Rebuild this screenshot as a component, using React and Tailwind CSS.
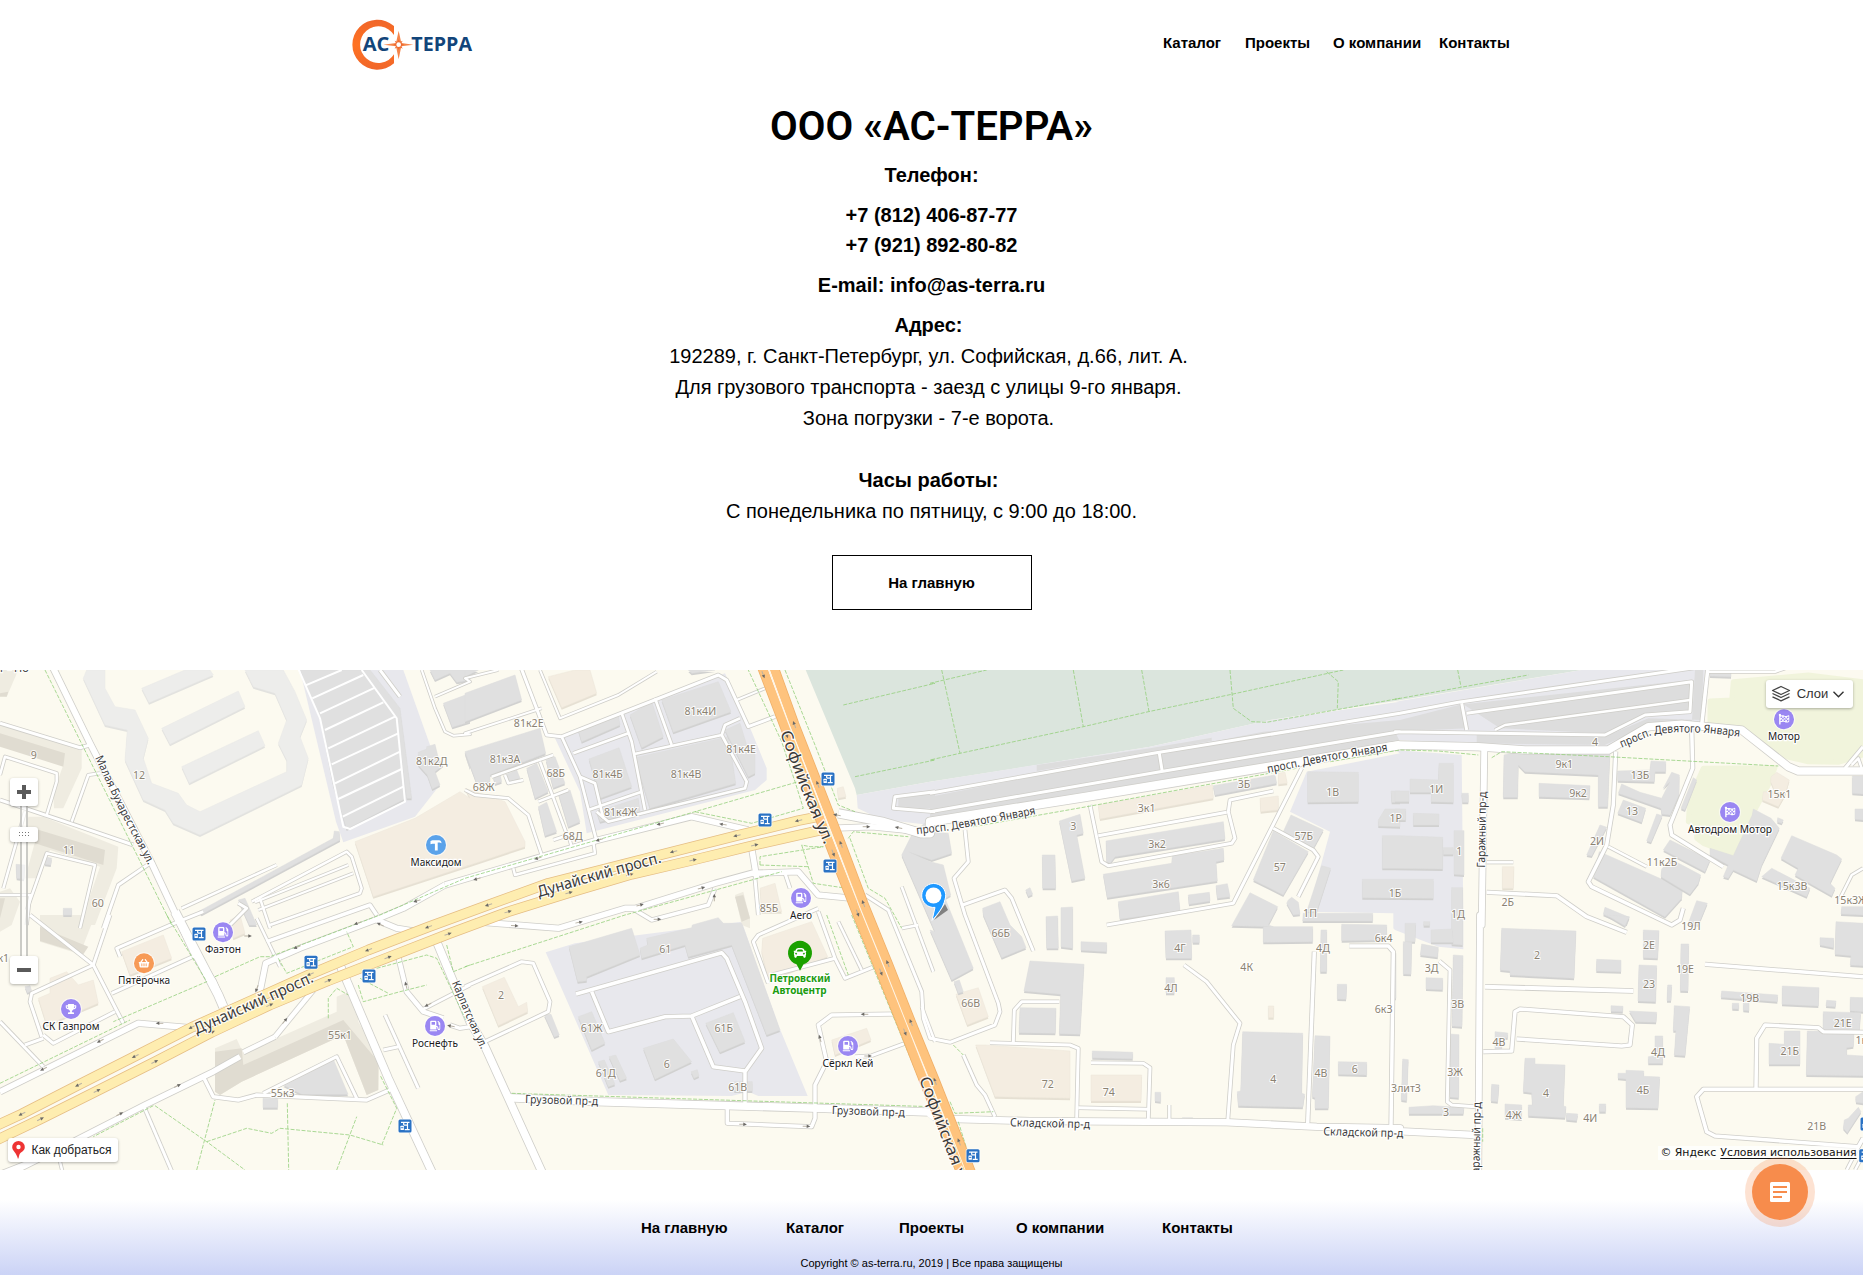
import React from "react";
import { FaGasPump, FaShoppingBasket, FaTrophy, FaCar, FaFlagCheckered } from "react-icons/fa";

/* Map geometry is stored in 1/3 px units on eight tiles; a letter before a point selects its tile. */
const TILES = { A: [0, 665], B: [465, 665], C: [930, 665], D: [1395, 665], E: [0, 915], F: [465, 915], G: [930, 915], H: [1395, 915] };

function pt(tile, x, y) {
  const [ox, oy] = TILES[tile];
  return [ox + x / 3, oy + y / 3];
}

function pts(str) {
  let tile = "A";
  return str
    .trim()
    .split(/\s+/)
    .map((t) => {
      if (/[A-H]/.test(t[0])) {
        tile = t[0];
        t = t.slice(1);
      }
      const [x, y] = t.split(",").map(Number);
      return pt(tile, x, y).map((n) => n.toFixed(1)).join(",");
    })
    .join(" ");
}

const INDUSTRIAL = [
  "A1080,15 1210,15 1290,240 1312,370 1245,455 1030,532 1008,470 900,15",
  "B270,220 780,25 810,90 860,200 905,310 905,345 870,375 365,505 345,380",
  "F242,112 330,85 830,20 940,330 1028,543 880,543 850,530 800,543 430,540",
  "B1175,390 C0,350 660,245 1020,165 1410,110 D0,110 560,15 930,15 920,180 760,175 640,255 0,225 C1410,240 0,480 B1265,465 1220,450 1178,430",
  "C1130,320 1410,265 D0,255 200,270 205,765 H205,103 130,95 0,45 G1390,40 C1390,745 1135,740 1200,500 1080,440",
];
const PARKS = ["B1022,15 C0,15 D560,15 0,108 C1020,165 660,245 320,300 0,350 B1175,390 1170,370"];
const LAWNS = [
  "D1015,50 1240,30 1404,50 1404,270 1330,292 1240,290 1150,270 1040,190 945,175 945,108 1010,105",
  "D925,310 1140,308 1120,360 1060,470 1015,570 925,535 905,520 905,480 880,470 885,400",
];

const GREY = [
  "A900,15 1085,15 1150,110 1190,160 1218,400 1040,492 1000,360 960,160",
  "A1088,15 1110,15 1200,130 1235,400 1220,400 1190,160",
  "A1255,262 1280,252 1280,245 1305,238 1315,280 1330,300 1305,320 1320,360 1297,372 1282,330 1255,300",
  "A1300,15 1410,15 1410,45 1370,52 1350,25 1305,45 1290,15", "A1330,115 1410,85 1410,170 1357,187",
  "A595,740 1000,520 1003,498 1018,500 1020,525 605,748", "A715,705 735,700 770,780 748,780", "A1395,265 1410,260 1410,310",
  "B0,85 150,30 170,105 0,170", "B0,15 40,15 0,35", "B0,260 225,190 242,265 75,330 75,350 35,355", "B670,15 750,15 680,25",
  "B340,195 460,150 465,180 350,230", "B495,150 560,110 595,215 530,248", "B590,105 760,50 798,140 625,202", "B372,282 462,248 500,365 405,400",
  "B510,278 790,215 800,275 812,355 555,430", "B780,195 825,175 845,240 870,260 870,325 850,335", "B395,440 520,400 525,440 405,470",
  "B243,285 270,275 300,355 265,368", "B185,310 215,295 250,380 210,400", "B120,330 155,315 165,340 130,350", "B280,385 315,375 345,470 310,485", "B220,425 245,412 275,500 240,512", "B85,335 105,328 110,350 90,357",
  "F312,95 500,40 525,120 365,185 365,197 338,200", "F525,100 548,90 545,70 680,38 682,30 760,8 775,25 830,25 945,345 905,360 800,90 670,125 660,90 530,130",
  "F340,305 380,290 420,385 380,405", "F535,400 625,372 680,440 570,493", "F722,325 805,293 840,380 765,412", "F400,440 418,435 450,508 430,515", "F432,425 452,420 485,490 465,497", "F678,470 697,464 702,483 687,490", "F808,500 862,500 862,528 808,528",
  "B1395,460 C0,500 55,505 65,565 5,585 B1330,560 C0,590 40,600 62,690 45,700 130,910 G130,160 65,195 0,45 B1410,800 1310,570 1340,510", "G72,200 88,195 100,230 85,235",
  "E850,510 1000,433 1044,538 905,538", "E789,550 833,550 833,578 789,578", "F238,300 258,298 283,360 268,366", "E75,215 90,212 95,228 82,233",
  "A48,598 75,600 72,643 50,640", "A135,575 155,580 152,600 135,598", "A190,730 215,730 215,750 190,750",
  "C388,468 450,448 460,505 440,510 465,640 425,648", "C337,570 375,570 377,670 338,670", "C393,728 428,726 428,850 393,845", "C348,755 383,753 385,850 350,850", "C287,675 300,668 308,688 295,694",
  "C158,730 210,710 240,780 G275,65 288,98 215,128 160,0", "C850,362 1035,330 1040,355 855,390", "C528,528 880,470 885,522 555,575 540,595 530,590",
  "C520,628 725,595 727,573 880,550 882,585 858,590 862,648 532,698", "C565,710 745,680 750,738 570,762", "C775,690 838,682 840,708 777,718", "C858,662 892,656 900,695 862,700",
  "C1083,450 1180,495 1150,550 1060,500", "C1030,498 1135,560 1060,690 970,645", "C960,683 1043,725 1015,780 G1030,35 905,32", "C1075,705 1085,697 1105,712 1110,748 1090,750 1070,715",
  "C1175,602 1202,610 1160,740 1130,740", "C1133,320 1285,322 1285,410 1133,412", "C1120,745 1328,745 1328,765 G1328,18 1118,18", "G1000,35 1148,35 1148,80 1000,82", "G1235,28 1370,30 1370,75 1235,77",
  "G1173,45 1190,45 1190,170 1171,170", "G1222,208 1250,208 1248,253 1222,252", "G705,48 783,45 785,130 708,130", "G788,60 808,60 808,83 788,83", "G708,188 733,188 733,235 708,235", "G453,80 530,83 530,110 453,106",
  "G300,138 462,148 450,358 388,356 392,238 282,228", "G270,278 378,280 376,355 267,353", "G487,408 608,412 608,431 487,428", "G675,532 692,532 692,560 675,558", "G757,608 788,608 788,620 757,620",
  "G938,350 1118,355 1115,535 1124,538 1118,577 925,572 922,530 932,528", "G1155,362 1200,364 1195,580 1155,580 1155,548 1147,545", "G1225,440 1310,442 1310,480 1225,478",
  "C1383,378 1410,378 1410,412 1385,412", "C1365,432 1410,432 1410,485 1345,483 1345,465", "C1357,512 1410,512 D143,517 143,612 0,610 C1357,610", "C1297,643 1410,643 D115,643 115,700 C1297,698",
  "D0,378 42,378 42,410 0,410", "D45,342 130,345 132,295 175,295 175,412 108,410 110,382 45,382", "D200,385 220,385 220,412 202,412", "D55,445 132,447 132,480 55,480", "D0,432 32,432 32,465 0,465", "D145,548 175,548 175,568 145,568", "D177,497 207,497 207,630 177,628", "D170,668 203,668 203,780 H203,90 170,88 170,0",
  "H30,25 62,25 60,80 30,80", "H108,45 172,42 175,82 108,82", "H86,20 104,20 104,32 86,32",
  "D327,270 390,255 645,262 638,425 610,425 610,330 390,320 370,300 368,397 325,397", "D432,355 585,362 583,400 432,395", "D668,318 765,315 768,288 812,290 812,320 780,320 778,350 668,347", "D680,357 735,382 800,400 825,350 805,370 830,322 853,330 852,390 825,450 800,447 798,430 670,385",
  "D685,405 752,430 740,472 668,445", "D785,447 802,452 768,532 755,527", "D615,480 635,487 590,573 575,570", "D895,338 905,345 870,435 858,430", "D613,560 862,670 860,700 810,755 595,635", "D825,525 945,585 930,620 805,555", "D800,612 828,583 917,630 910,655 885,688 798,635",
  "D945,550 1015,572 1072,450 1075,432 1128,460 1153,490 1100,600 1085,648 1015,615 1000,640 985,635 1000,600 945,570", "D1190,512 1325,570 1340,582 1305,655 1320,670 1310,692 1200,630 1210,610 1158,580",
  "D1130,610 1245,670 1235,695 1100,635", "D1148,458 1165,465 1160,475 1147,470", "D1372,333 1404,333 1404,387 1372,385", "D1380,432 1404,432 1404,465 1380,463", "D1340,725 1404,725 1404,750 1338,747", "D630,727 703,757 695,778 625,748", "D905,707 937,715 910,780 880,775", "D945,15 1008,15 1008,35 945,33",
  "H635,0 703,5 690,33", "H320,40 543,48 537,190 345,180 345,168 316,165", "H605,133 678,136 678,170 604,168", "H745,45 792,47 788,130 745,128", "H732,150 785,152 782,260 729,258", "H858,87 881,87 879,228 856,227", "H818,210 830,210 828,257 816,257",
  "H703,288 785,292 783,322 722,320", "H648,272 684,274 683,290 648,289", "H838,272 884,275 870,422 838,420 843,347 835,347", "H780,363 803,363 803,445 760,445 760,425 780,422", "H669,475 693,475 693,466 746,468 746,484 794,486 789,580 693,578 693,492 669,490",
  "H390,430 420,430 420,447 510,450 505,573 513,575 510,608 400,602 400,570 412,570 410,533 385,530", "H330,567 380,570 380,612 330,608", "H514,595 548,597 545,617 514,614", "H613,567 632,567 632,590 613,590", "H290,508 312,510 308,560 288,558", "H300,350 338,354 338,368 322,370 320,405 300,403",
  "H0,115 3,115 3,250 0,250", "H25,80 50,82 48,178 25,177", "H80,87 130,97 128,127 76,120", "H93,188 143,190 143,224 93,222", "H175,120 204,122 201,335 171,333", "H165,357 192,359 191,548 165,546", "H23,432 40,434 35,557 19,555", "H42,577 115,572 207,578 205,596 42,596",
  "H1323,20 1404,25 1404,152 1366,150 1368,122 1320,118", "H1275,68 1316,70 1316,98 1275,90", "H980,228 1148,240 1147,260 978,247", "H1162,213 1272,218 1270,273 1161,268", "H1295,256 1323,258 1321,275 1293,273", "H1366,247 1404,248 1404,290 1365,287", "H1285,290 1397,293 1393,348 1284,347",
  "H1237,348 1377,350 1375,395 1355,398 1355,420 1404,423 1404,482 1234,480", "H1168,348 1215,348 1215,448 1122,448 1122,385 1168,388", "H1390,577 1398,590 1357,653 1345,640 1348,615 1360,610", "H1012,265 1031,265 1031,282 1012,281", "H1045,265 1062,265 1062,287 1045,286", "H1382,545 1404,530 1404,565 1383,562",
];
const YARDS = [
  "C0,395 1000,200 1410,165 D200,118 215,190 0,200 C1410,230 0,455", "C320,300 660,250 845,218 845,228 320,318",
  "D205,118 885,45 890,140 750,150 630,205 315,190", "D245,210 630,215 760,160 920,165 925,15 900,15 890,180 760,180 630,240 245,235",
  "B1300,400 1410,385 1410,430 1300,435",
];
const LIGHT = [
  "A250,40 260,15 315,15 315,70 345,125 405,135 445,220 430,280 455,355 535,385 560,420 600,440 860,320 860,285 835,235 860,165 825,85 760,65 735,15 850,15 885,80 920,165 900,215 925,280 905,360 600,510 520,475 495,435 430,405 375,285 382,195 315,180",
  "A425,70 555,15 630,15 640,30 447,113", "A485,190 715,78 735,125 510,238", "A545,305 775,197 795,242 568,355",
];
const BEIGE = [
  "A1065,530 1245,460 1380,380 1410,400 B0,370 120,410 180,530 180,545 0,605 A1410,600 1120,695", "B250,35 330,15 375,15 395,85 290,128",
  "F52,215 118,187 160,275 185,262 188,290 100,332", "F893,70 1040,20 1088,125 910,195 890,110", "F1100,375 1205,340 1218,375 1110,420", "B885,670 930,655 950,740 890,740", "B1117,370 1135,365 1143,395 1120,400",
  "C505,420 848,360 850,400 510,462", "C1045,325 1065,322 1072,355 1045,358", "C990,400 1045,393 1045,435 992,440", "G78,238 145,218 175,305 112,330", "G137,390 165,390 420,408 420,550 195,545", "G483,480 635,480 633,558 483,558", "G1015,273 1031,273 1031,308 1015,308",
  "D322,605 357,605 355,670 322,670", "D1128,335 1145,322 1183,345 1170,390 1150,425 1102,405 1105,380 1140,380 1127,350", "E690,15 720,0 735,55 700,70", "E365,110 490,60 515,130 390,180", "E115,250 150,235 150,190 200,170 235,210 280,195 295,265 140,330",
];
const TAN = [
  ["A0,178 245,252 245,310 190,430 162,430 160,385 190,300 0,240", "A0,205 195,265 190,305 0,245"],
  ["A85,455 130,455 355,545 350,610 285,780 240,780 300,605 150,555 115,640 75,640 105,530 75,520", "A100,490 315,555 310,600 105,535"],
  ["A0,680 30,670 60,710 35,780 0,800", "A0,700 15,700 0,760"], ["A0,15 55,15 20,95 0,90", "A0,85 25,80 20,95 0,95"],
  ["E285,0 240,118 120,80 120,0", "E120,35 265,95 250,118 120,78"],
  ["E645,400 710,372 730,415 1010,290 1010,245 1045,230 1070,260 1075,320 1138,430 1135,525 1100,540 1030,360 725,500 660,540 645,530", "E645,410 725,400 730,450 1030,315 1135,440 1135,525 1100,540 1030,360 725,500 660,540 645,530"],
  ["B810,690 835,680 855,760 855,790 830,780", "B810,695 835,690 855,760 830,770"],
];

/* [width in px, points] */
const ROADS = [
  [6.5, "A155,0 270,235 455,595 580,860 E640,200 670,270"], [9, "E525,-10 655,240 670,275"], [6, "E0,530 415,325 590,340"], [6, "E0,790 200,690 435,570 640,470 720,425"],
  [8, "E1020,150 1165,490 1300,780"], [8, "E1312,85 1410,320 F60,395 235,780"], [8, "F130,548 400,560 1060,580 1410,592 G0,610"], [7, "G70,612 300,618 890,622 1160,635 1410,640 H0,648 240,660"],
  [9, "B1120,445 1250,470 1370,505 1395,505 C0,470 470,395 1110,290 1410,240"], [8, "C1370,245 1410,240 D250,245 390,255 640,255 760,185 860,178 1040,195 1180,305 1210,318 1404,318"],
  [6.5, "D268,250 260,780 H255,0 250,765"], [6, "B-60,660 400,525 680,455 850,495"], [6, "B1100,490 1220,485 1370,500"],
  [6, "E780,230 797,145 900,100 1125,15 1210,-20 B-60,660"], [6, "E1130,15 1190,40 1240,48"], [5, "E1195,125 1220,230 1270,290 1330,310"], [3.5, "E1265,285 1410,210"], [4, "E1350,330 1380,340 1410,335"],
  [6, "F30,20 280,40 480,-20 B510,730 750,655 860,625 1000,620 1060,690 1160,700"], [4, "B510,735 560,765 730,720 750,670"], [6, "B860,550 875,640"], [3.5, "B870,640 880,750"], [3.5, "B960,625 975,670"],
  [5, "E825,365 940,225"], [5, "E730,412 825,365"], [4, "E610,485 640,545 715,555 770,540 1100,555 1180,520"], [3.5, "E790,535 1010,425 1070,550"], [3.5, "E430,570 520,780"], [3.5, "E1155,300 1255,520"], [3.5, "E1150,405 1195,395"], [4, "E0,775 190,700"], [3, "E180,740 190,780"],
  [3.5, "E90,0 280,150 370,325"], [3.5, "E280,150 330,0"], [3.5, "E335,235 600,115"], [3.5, "E610,-10 535,20 350,100 360,125"], [3.5, "E0,320 130,455"], [3.5, "E75,390 130,370"], [3.5, "E125,365 90,260 95,235 280,150"], [3.5, "E130,360 160,385 345,290"],
  [3.5, "A0,175 240,248 270,240"], [3.5, "A0,405 210,475 400,540"], [3, "A215,470 265,330 300,325"], [3, "A0,330 15,275 170,325 170,350 140,450"], [3.5, "A310,790 355,660 450,595"], [3, "A80,735 140,565 285,600 240,790"], [3, "A10,670 75,440"], [3, "A0,690 90,690 80,780"],
  [3, "A545,730 830,600"], [3, "A755,710 1040,560 1055,575 1085,670 1080,685 810,780"], [2.5, "A775,735 1060,625"], [2.5, "A765,712 1045,600"], [3, "A780,700 810,790"], [3.5, "A690,780 740,730 715,715"], [4, "A800,830 1110,720 1130,750"], [3, "A770,760 840,905"],
  [2.5, "A1265,15 1305,130 1335,200 1360,212 1410,208 B0,205 230,130"], [3.5, "A1140,15 1200,95"], [2.5, "A1305,95 1410,50 B0,40 100,15"], [3.5, "B165,0 245,210 290,215 760,30 785,45 850,185 930,155"], [2.5, "B225,15 285,160 460,90 575,20"], [2.5, "B815,105 900,70"],
  [3.2, "B290,215 345,335 395,530"], [3.2, "B325,265 490,205"], [3.2, "B470,145 500,230 540,435"], [3.2, "B570,100 620,240"], [3.2, "B505,268 770,210 780,180 825,160"], [3.2, "B770,210 845,350 840,370 550,440 430,470 395,440"], [3.2, "B345,335 390,355 415,460"], [3.2, "B370,435 530,380"],
  [3, "B80,335 265,270"], [3, "B225,290 310,520"], [3, "B220,410 310,375"], [3, "B120,330 130,355 175,345"], [3, "B0,375 30,390 130,400 190,450 230,570"], [3, "B265,525 310,510 320,545"], [3, "B145,610 150,630 390,565 385,530"],
  [4, "F333,237 770,113 785,130 840,260 890,400 840,470 840,565"], [4, "F380,230 430,350 600,305 680,303 825,245"], [4, "F680,303 745,455 840,468"], [3.5, "F0,215 170,140 205,145 255,260 250,290 60,380"], [4, "F787,570 787,625 1040,635 1050,610 1050,510 1085,440 1060,330 1100,300 1290,297"], [3.5, "F1170,425 1220,422 1320,385"],
  [3.5, "F910,205 865,80 880,60 1060,-20"], [3.5, "F1060,-10 1110,130 1140,190 1228,155"], [3.5, "F920,180 1110,130"], [3, "F1120,20 1190,165"], [3.5, "B1200,690 1270,735 F1370,230 1375,310 G0,370 60,382 195,330 210,290 205,265 105,0 C72,640 115,590 105,495"], [3, "B1310,665 F1405,170"], [3, "F1310,40 1360,30"], [3, "F1410,380 1370,275"],
  [3.5, "C98,720 225,675 245,700 G310,108"], [3.5, "C480,420 515,590 535,602 905,535 915,520 895,440 900,405 1030,378"], [3.5, "C505,512 890,442"], [3.5, "C1115,310 910,715 530,780"], [3.5, "C1030,490 1150,555 1165,575 1105,695"],
  [3.5, "G100,420 140,510 165,540 195,605"], [3.5, "G180,383 420,390 445,400 440,608"], [3.5, "G250,383 253,285 275,260 388,260"], [3.5, "G483,443 640,445 660,458 655,612"], [3.5, "G445,578 655,583"], [3, "G718,570 718,615"], [3.5, "G762,150 830,200 930,325 910,390 893,620"], [4, "G1153,110 1133,625"], [4, "G1258,93 1375,93 1390,110 1383,635"],
  [3.5, "B1410,380 1290,395 1285,430 1410,440"], [3.5, "C0,385 670,265 1410,145 D190,112 920,5"], [3.5, "C0,440 690,320 1410,200 D0,200 630,210 750,150 885,140 890,50 215,145"], [3.5, "C688,265 697,320"], [3.5, "D200,115 215,195"], [3, "D300,195 330,180 885,105"], [4, "D938,15 920,180"], [3, "D940,20 1140,20 1170,10"],
  [4, "D662,260 655,420 635,540 580,650 590,665 830,780 855,765 865,730"], [3, "D640,545 755,605"], [4, "D890,190 893,310 825,480 830,510 985,605"], [4, "D275,682 485,692 575,755 H695,52"], [3, "D275,592 355,592"], [3.5, "D1350,310 1404,245"], [3, "D1370,300 1390,280 1400,310"], [3, "D1404,610 1370,630 1335,700"],
  [4.5, "H270,215 715,228"], [4, "H265,410 350,408 360,290 375,282 685,305 712,330 705,390 680,393 365,372"], [4, "H930,148 1404,185"], [4, "H1083,520 1085,370 1110,330 1270,338 1285,350 1404,352"], [4, "H1404,523 925,523 905,545 935,650 960,663 1390,695 1404,670"], [3.5, "H133,138 165,165 157,560 170,570 240,575"], [3, "H1355,765 1404,670"], [3, "H1380,765 1404,720"],
];
const GARAGE_LINES = [
  "A890,0 960,160 1030,485 1050,492 1215,410 1190,160 1085,15", "A915,62 1025,15", "A937,100 1090,30", "A960,145 1125,68", "A975,195 1150,112", "A985,250 1185,155", "A995,298 1195,205", "A1005,355 1200,260", "A1015,402 1205,312", "A1028,455 1210,365",
];
const PATHS = [
  "A135,15 515,780", "E0,505 390,315", "E500,0 620,200 340,320", "E645,185 780,125 810,125 1140,0 B0,640 690,440 1000,350", "B690,440 860,475 1015,430 990,350 950,230 850,15", "B960,15 1050,240 1120,420 1170,440", "F0,155 480,0 B950,620", "E465,572 620,680 735,765",
  "E460,572 280,665", "E590,765 645,555", "E620,680 740,640 815,655 840,640 1050,660 1150,690", "E862,565 866,765", "E1010,765 1070,605", "E1145,690 1190,580 1140,480", "E835,130 860,175 1060,95 1040,50", "E985,310 985,250 1010,220 1045,240", "E1075,210 1090,260 1200,230 1280,210", "E1080,190 1165,235", "E1130,160 1280,120 1310,130 1400,320", "E1340,90 1360,170 1410,150",
  "B885,600 885,575 1075,545 1035,545 1010,540", "B885,600 1030,605", "B1010,540 1045,655 1145,670", "B1150,520 1165,500 1330,515", "B1155,520 1210,670 1260,700 1310,790", "F1085,0 1150,180", "F1160,0 1400,585", "F140,535 1400,575", "B1135,120 1410,55 C0,55 170,15", "B1170,335 1410,285 C0,285 90,265 460,185 655,140 905,88 1240,15", "C35,15 90,265", "C430,15 460,185", "C635,15 657,140", "C900,15 910,130 965,170 1010,172 1410,100 D0,103 400,30", "C1190,20 1225,50 1222,130", "D188,15 198,65",
  "C130,485 470,425 1100,310", "C1200,290 1410,255 D130,258 250,270", "D290,278 320,260 640,275 1150,303", "G70,390 100,420", "G60,560 75,595 190,590", "G85,620 130,765", "H263,640 263,680",
];
const YELLOW = [
  "E-20,636 65,597 235,510 405,424 575,337 930,178 1105,105 1285,36 B70,720 250,655 625,560 815,512 1000,467 1095,448",
  "E-20,680 122,612 292,527 465,440 635,352 810,270 985,197 1165,127 1345,57 B130,740 313,683 500,628 685,585 870,540 1100,488",
];
const ORANGE = ["B885,-10 965,200 1105,565 1178,750 F1248,172 1320,352 G-5,530 68,708 100,790", "B920,-10 988,178 1058,357 1128,537 1195,715 F1268,145 1338,322 1410,498 G87,680 130,790"];

/* [point, angle] */
const ARROWS = [
  ["E65,597", 153], ["E235,510", 153], ["E405,424", 153], ["E575,337", 153], ["E930,178", 157], ["E1105,105", 158], ["E1285,36", 160], ["B70,720", 163], ["B625,560", 165], ["B815,512", 166], ["B1000,467", 167],
  ["E122,612", -27], ["E292,527", -27], ["E465,440", -27], ["E635,352", -25], ["E810,270", -24], ["E985,197", -22], ["E1165,127", -21], ["E1345,57", -19], ["B130,740", -17], ["B313,683", -16], ["B495,629", -15], ["B685,585", -14], ["B870,540", -14],
  ["B895,30", 69], ["B965,210", 69], ["B1105,565", 69], ["B1178,745", 69], ["F1248,172", 69], ["F1320,352", 69], ["B988,178", 249], ["B1058,357", 249], ["B1128,537", 249], ["B1195,715", 249], ["F1268,145", 249], ["F1338,322", 249], ["G15,498", 249], ["G87,680", 249],
  ["E130,462", 153], ["E300,378", 153], ["E478,325", 180], ["E533,512", -27], ["E360,597", -27], ["E890,97", 158], ["E1072,25", 160], ["B35,642", 163], ["B218,580", 163], ["B402,525", 163], ["B585,477", 167], ["B773,478", 190], ["E855,317", -50], ["E770,222", 110], ["E1140,28", 205], ["E1218,210", 255], ["E1283,270", 153], ["E1352,333", 190], ["E745,63", 0], ["A1250,708", 163],
  ["F150,32", 4], ["F343,22", -12], ["B526,720", -15], ["B710,669", -15], ["B578,763", 0], ["B748,697", 270], ["B1205,485", 0], ["B1300,488", 190], ["B1115,450", 190], ["F835,628", 2], ["F1025,634", 2], ["F1065,370", 255], ["F1198,298", 180], ["F1210,423", 0],
];

const HOUSES = [
  ["A101,270", "9"], ["A417,330", "12"], ["A207,555", "11"], ["A293,715", "60"], ["A1295,287", "81к2Д"], ["E10,130", "к1"], ["E1020,360", "55к1"], ["E848,535", "55к3"],
  ["B191,175", "81к2Е"], ["B120,282", "81к3А"], ["B272,325", "68Б"], ["B56,367", "68Ж"], ["B323,513", "68Д"], ["B428,327", "81к4Б"], ["B663,327", "81к4В"], ["B706,138", "81к4И"], ["B828,252", "81к4Е"], ["B467,441", "81к4Ж"], ["B912,729", "85Б"],
  ["F601,102", "61"], ["F108,240", "2"], ["F380,339", "61Ж"], ["F776,339", "61Б"], ["F605,447", "6"], ["F422,475", "61Д"], ["F818,516", "61В"],
  ["C430,483", "3"], ["C650,430", "3к1"], ["C681,538", "3к2"], ["C693,657", "3к6"], ["C942,357", "3Б"], ["C1121,513", "57Б"], ["C1049,606", "57"], ["C1140,745", "1П"], ["C1208,381", "1В"], ["D2,459", "1Р"], ["D0,685", "1Б"],
  ["G212,55", "66Б"], ["G122,265", "66В"], ["G353,507", "72"], ["G536,531", "74"], ["G750,99", "4Г"], ["G723,220", "4Л"], ["G950,157", "4К"], ["G1030,492", "4"], ["G1179,100", "4Д"], ["G1361,69", "6к4"], ["G1361,283", "6к3"], ["G1173,474", "4В"], ["G1274,462", "6"],
  ["D124,372", "1И"], ["D193,558", "1"], ["D189,748", "1Д"], ["D600,231", "4"], ["D508,297", "9к1"], ["D549,385", "9к2"], ["D735,330", "13Б"], ["D711,438", "13"], ["D606,528", "2И"], ["D801,591", "11к2Б"], ["D338,712", "2Б"], ["D1153,387", "15к1"], ["D1191,663", "15к3В"], ["D1368,706", "15к3Ж"],
  ["H888,34", "19Л"], ["H426,120", "2"], ["H762,91", "2Е"], ["H762,207", "23"], ["H870,162", "19Е"], ["H110,160", "3Д"], ["H188,267", "3В"], ["H180,471", "3Ж"], ["H33,519", "3лит3"], ["H153,591", "3"], ["H312,381", "4В"], ["H453,534", "4"], ["H356,600", "4Ж"], ["H586,608", "4И"], ["H789,412", "4Д"], ["H744,525", "4Б"], ["H1064,249", "19В"], ["H1343,324", "21Е"], ["H1184,408", "21Б"], ["H1265,633", "21В"], ["H1399,376", "1к"],
];

/* [id, baseline path, text, font size, length in px] */
const STREETS = [
  ["s1", "A285,278 360,440 449,608", "Малая Бухарестская ул.", 11.5, 120],
  ["s2", "E590,358 760,282 955,194", "Дунайский просп.", 15.5, 129],
  ["s3", "B222,697 400,644 606,588", "Дунайский просп.", 15.5, 128],
  ["s4", "B945,203 1005,365 1085,555", "Софийская ул.", 16, 121],
  ["s5", "F1362,492 1500,855", "Софийская ул.", 16, 121],
  ["s6", "E1355,203 1400,310 F52,412", "Карпатская ул.", 11.5, 73],
  ["s7", "F180,564 410,571", "Грузовой пр-д", 11.5, 73],
  ["s8", "F1100,597 1330,605", "Грузовой пр-д", 11.5, 73],
  ["s9", "G240,634 490,640", "Складской пр-д", 11.5, 80],
  ["s10", "G1180,661 H35,667", "Складской пр-д", 11.5, 80],
  ["s11", "B1355,508 C65,495 331,445", "просп. Девятого Января", 11.5, 121],
  ["s12", "C1014,324 1190,288 1384,256", "просп. Девятого Января", 11.5, 122],
  ["s13", "D680,248 775,208 840,202 930,203 1046,216", "просп. Девятого Января", 11.5, 121],
  ["s14", "D270,608 274,370", "Гаражный пр-д", 11.5, 76],
  ["s15", "H253,790 258,555", "Гаражный пр-д", 11.5, 76],
];

function HammerIcon({ x, y }) {
  return <path transform={`translate(${x} ${y})`} d="M0 1.5L2 .8H8.5C10 .8 11 2 11 3.8L9.2 3H7.2V11H4.4V4.2H2L0 4.8Z" fill="#fff" />;
}

const POIS = [
  ["A1308,540", "Максидом", "#5aa2ea", HammerIcon, 51], ["E669,52", "Фаэтон", "#9a87f2", FaGasPump, 36], ["E432,145", "Пятёрочка", "#f79a56", FaShoppingBasket, 52], ["E213,282", "СК Газпром", "#9a87f2", FaTrophy, 57], ["E1305,333", "Роснефть", "#9a87f2", FaGasPump, 46],
  ["B1008,699", "Aero", "#9a87f2", FaGasPump, 22], ["F1149,393", "Сёркл Кей", "#9a87f2", FaGasPump, 51], ["D1167,163", "Мотор", "#9a87f2", FaFlagCheckered, 32], ["D1005,441", "Автодром Мотор", "#9a87f2", FaFlagCheckered, 84],
];
const STOPS = ["E597,57", "E933,142", "E1107,183", "E1215,633", "B1089,342", "B900,465", "B1095,603", "G129,722", "H1416,627", "H1412,722"];

const one = (s) => pts(s).split(",").map(Number);

function Shape({ d, fill, side, line }) {
  return (
    <g>
      <polygon points={pts(d)} fill={side} transform="translate(0 2)" />
      <polygon points={pts(d)} fill={fill} stroke={line} strokeWidth="0.5" />
    </g>
  );
}

function Line({ d, w, c, ...rest }) {
  return <polyline points={pts(d)} fill="none" stroke={c} strokeWidth={w} strokeLinejoin="round" {...rest} />;
}

function BusStop({ at }) {
  const [x, y] = one(at);
  return (
    <g transform={`translate(${x - 6.5} ${y - 6.5})`}>
      <rect x="-0.8" y="-0.8" width="14.6" height="14.6" rx="2" fill="#fff" opacity="0.7" />
      <rect width="13" height="13" rx="1.5" fill="#2a72c4" />
      <path d="M2.5 2.9h8.5M5.2 2.9v2.6M9 2.9v7.2M6.2 10.1h5M5.2 5.6h3.6" stroke="#fff" strokeWidth="1.2" fill="none" />
      <rect x="2" y="6.2" width="3.4" height="4.3" rx="0.5" fill="#fff" />
      <path d="M2.6 8.2h2.2" stroke="#2a72c4" strokeWidth="0.9" />
    </g>
  );
}

function Poi({ at, name, color, Icon, len }) {
  const [x, y] = one(at);
  return (
    <g>
      <circle cx={x} cy={y} r="11" fill="#fff" opacity="0.6" />
      <circle cx={x} cy={y} r="10" fill={color} />
      <Icon x={x - 5.5} y={y - 5.5} size={11} color="#fff" />
      <text x={x} y={y + 21} textAnchor="middle" textLength={len} lengthAdjust="spacingAndGlyphs" fontSize="11" fill="#1a1a1a" stroke="#fff" strokeWidth="2.4" paintOrder="stroke">{name}</text>
    </g>
  );
}

function MapCanvas() {
  const [cx, cy] = one("F1005,115");
  return (
    <svg className="block h-[500px] w-full" viewBox="0 670 1863 500" preserveAspectRatio="none" fontFamily="'Noto Sans', 'Open Sans', sans-serif">
      <rect y="670" width="1863" height="500" fill="#fcfaf0" />
      {PARKS.map((d) => <polygon key={d} points={pts(d)} fill="#dbe5dd" />)}
      {INDUSTRIAL.map((d) => <polygon key={d} points={pts(d)} fill="#e8e8ed" />)}
      {LAWNS.map((d) => <polygon key={d} points={pts(d)} fill="#f1f4dc" stroke="#f1f4dc" strokeWidth="5" strokeLinejoin="round" />)}
      {YARDS.map((d) => <polygon key={d} points={pts(d)} fill="#dddddd" />)}
      {LIGHT.map((d) => <Shape key={d} d={d} fill="#ededeb" side="#e2e2df" line="#e9e9e6" />)}
      {BEIGE.map((d) => <Shape key={d} d={d} fill="#f4ede1" side="#e6e0d3" line="#ede6da" />)}
      {TAN.map(([d, f]) => (
        <g key={d}>
          <polygon points={pts(d)} fill="#efece1" />
          <polygon points={pts(f)} fill="#e0dcd1" />
        </g>
      ))}
      {GREY.map((d) => <Shape key={d} d={d} fill="#e0e0e0" side="#d1d1d0" line="#dcdcdc" />)}
      {ROADS.map(([w, d]) => <Line key={d} d={d} w={w + 1.1} c="#cfcec9" />)}
      {ROADS.map(([w, d]) => <Line key={d} d={d} w={w - 0.5} c="#ffffff" />)}
      {GARAGE_LINES.map((d) => <Line key={d} d={d} w={2} c="#ffffff" />)}
      {PATHS.map((d) => <Line key={d} d={d} w={0.8} c="#94cf7c" strokeDasharray="4 1.5" />)}
      {YELLOW.map((d) => <Line key={d} d={d} w={10.5} c="#e5bd84" />)}
      {YELLOW.map((d) => <Line key={d} d={d} w={9} c="#feedb0" />)}
      {ORANGE.map((d) => <Line key={d} d={d} w={10} c="#f0b069" />)}
      <Line d="B903,-10 976,190 1117,551 1187,732 F1258,158 1329,337 G5,515 78,694 115,790" w={2.4} c="#fff5e5" />
      {ORANGE.map((d) => <Line key={d} d={d} w={8.4} c="#fec37d" />)}
      {ARROWS.map(([p, a]) => {
        const [x, y] = one(p);
        return (
          <g key={p} transform={`translate(${x} ${y}) rotate(${a})`}>
            <path d="M-4 0H1" stroke="#b9b2a4" strokeWidth="1" />
            <path d="M0-1.7L3.6 0L0 1.7Z" fill="#6c6a66" />
          </g>
        );
      })}
      <g fontSize="10.6" fill="#8b8272" stroke="#fff" strokeWidth="2" strokeOpacity="0.85" paintOrder="stroke" textAnchor="middle">
        {HOUSES.map(([p, t]) => {
          const [x, y] = one(p);
          return <text key={p} x={x} y={y + 3.9}>{t}</text>;
        })}
      </g>
      {STOPS.map((s) => <BusStop key={s} at={s} />)}
      <g fill="#3a3a3a" stroke="#fff" strokeOpacity="0.85" strokeWidth="2.4" paintOrder="stroke">
        {STREETS.map(([id, d, t, s, len]) => (
          <g key={id}>
            <path id={id} d={"M" + pts(d).split(" ").join("L")} fill="none" stroke="none" />
            <text fontSize={s} textLength={len} lengthAdjust="spacingAndGlyphs">
              <textPath href={"#" + id} textLength={len} lengthAdjust="spacingAndGlyphs">{t}</textPath>
            </text>
          </g>
        ))}
        <text x="0" y="671.5" fontSize="11">г - Но</text>
      </g>
      {POIS.map(([at, name, color, Icon, len]) => <Poi key={at} at={at} name={name} color={color} Icon={Icon} len={len} />)}
      <path d={`M${cx} ${cy + 17.5}L${cx - 3.5} ${cy + 11}A12 12 0 1 1 ${cx + 3.5} ${cy + 11}Z`} fill="#1ba100" />
      <FaCar x={cx - 6.5} y={cy - 7} size={13} color="#fff" />
      <g fontSize="11" fontWeight="700" fill="#219c10" stroke="#fff" strokeWidth="2.4" paintOrder="stroke" textAnchor="middle">
        <text x="800" y="982" textLength="61" lengthAdjust="spacingAndGlyphs">Петровский</text>
        <text x="799.5" y="993.5" textLength="54" lengthAdjust="spacingAndGlyphs">Автоцентр</text>
      </g>
      <path d="M934 920l14-10-3-6z" fill="#333" opacity="0.55" />
      <path d="M932 920.5L935 907.4A12 12 0 1 1 945 899.5C943.5 907 938 914 932 920.5Z" fill="#1e98ff" stroke="#fff" strokeWidth="1" />
      <circle cx="933.5" cy="895.5" r="8" fill="#fff" />
    </svg>
  );
}

function Logo() {
  return (
    <svg className="h-[90px] w-[300px]" viewBox="0 0 900 270" fontFamily="'Open Sans', sans-serif" fontWeight="700" fill="#12457a">
      <defs>
        <linearGradient id="ring" x1="0" y1="0" x2="0" y2="1">
          <stop offset="0" stopColor="#f0662a" />
          <stop offset="0.5" stopColor="#ff7222" />
          <stop offset="1" stopColor="#f0662a" />
        </linearGradient>
      </defs>
      <path d="M192 78A75 75 0 1 0 192 190L192 163A55 55 0 1 1 192 105Z" fill="url(#ring)" />
      <path d="M160 134L198 129L206 92L214 129L250 134L214 139L206 178L198 139Z" fill="#f5854a" />
      <path d="M206 118L210 126L218 122L214 130L222 134L214 138L218 146L210 142L206 150L202 142L194 146L198 138L190 134L198 130L194 122L202 126Z" fill="#ee6a30" />
      <circle cx="206" cy="134" r="7" fill="#fff" />
      <text x="98" y="154" fontSize="59" textLength="80" lengthAdjust="spacingAndGlyphs">АС</text>
      <text x="244" y="153" fontSize="59" textLength="182" lengthAdjust="spacingAndGlyphs">ТЕРРА</text>
    </svg>
  );
}

function MapControls() {
  const box = "absolute flex items-center justify-center rounded-[3px] bg-white shadow-[0_1px_3px_rgba(0,0,0,0.3)]";
  return (
    <>
      <div className="absolute left-[20px] top-[136px] h-[152px] w-[8px] border-x-2 border-[#b5b5b0]/70 bg-white/60" />
      <div className={box + " left-[10px] top-[108px] h-[28px] w-[28px]"}>
        <svg width="14" height="14"><path d="M7 0v14M0 7h14" stroke="#5a5a5a" strokeWidth="4" /></svg>
      </div>
      <div className={box + " left-[10px] top-[157px] h-[15px] w-[28px]"}>
        <svg width="11" height="5"><path d="M0 .5h11M0 3.5h11" stroke="#777" strokeDasharray="1 2" /></svg>
      </div>
      <div className={box + " left-[10px] top-[286px] h-[28px] w-[28px]"}>
        <svg width="14" height="4"><path d="M0 2h14" stroke="#5a5a5a" strokeWidth="4" /></svg>
      </div>
      <div className={box + " left-[8px] top-[468px] h-[24px] w-[110px] gap-[6px] pr-[2px] text-[12px] text-[#222]"}>
        <svg width="13" height="18" viewBox="0 0 13 18"><path d="M6.5 0A6.3 6.3 0 0 0 .2 6.3C.2 10 4.5 11.5 6 18C7.5 16 6.5 13.5 9 11.5C11 10 12.8 9 12.8 6.3A6.3 6.3 0 0 0 6.5 0Z" fill="#ee3434" /><circle cx="6.5" cy="6" r="2.2" fill="#fff" /></svg>
        <span className="whitespace-nowrap">Как добраться</span>
      </div>
      <div className={box + " left-[1766px] top-[10px] h-[28px] w-[87px] pr-[4px] text-[13px] text-[#333]"}>
        <svg width="20" height="18" viewBox="0 0 20 18" fill="none" stroke="#444" strokeWidth="1.3" strokeLinejoin="round"><path d="M10 1.5L18.5 5.5L10 9.5L1.5 5.5Z" /><path d="M1.5 8.5L10 12.5L18.5 8.5M1.5 11.8L10 15.8L18.5 11.8" /></svg>
        <span className="ml-[6px]">Слои</span>
        <svg className="ml-[5px]" width="11" height="7" fill="none" stroke="#333" strokeWidth="1.4"><path d="M.5 .8L5.5 5.8L10.5 .8" /></svg>
      </div>
      <div className="absolute left-[1658px] top-[476px] flex h-[14px] w-[201px] items-center justify-center gap-[4px] whitespace-nowrap bg-white/70 font-['DejaVu_Sans',sans-serif] text-[10.9px] leading-[14px] text-[#111]">
        <span>© Яндекс</span>
        <span className="underline underline-offset-2">Условия использования</span>
      </div>
    </>
  );
}

export default function App() {
  return (
    <div className="relative flex h-[1275px] w-full flex-col overflow-hidden bg-white font-['Liberation_Sans',Arial,sans-serif] text-black">
      <header className="flex h-[90px] pl-[330px]">
        <Logo />
        <nav className="ml-[533px] mt-[33px] flex whitespace-nowrap text-[15px] font-bold leading-[20px]">
          <a className="w-[82px]">Каталог</a>
          <a className="w-[88px]">Проекты</a>
          <a className="w-[106px]">О компании</a>
          <a>Контакты</a>
        </nav>
      </header>

      <main className="flex h-[580px] flex-col items-center whitespace-nowrap text-center text-[20px] leading-[31px]">
        <h1 className="mt-[11px] h-[60px] font-['Roboto',sans-serif] text-[40.2px] font-semibold leading-[51px]">ООО «АС-ТЕРРА»</h1>
        <p className="-mt-[1px] font-bold">Телефон:</p>
        <p className="mt-[9px] font-bold leading-[30px]">+7 (812) 406-87-77<br />+7 (921) 892-80-82</p>
        <p className="mt-[10px] font-bold">E-mail: info@as-terra.ru</p>
        <div className="mr-[6px] mt-[9px]">
          <p className="font-bold">Адрес:</p>
          <p>192289, г. Санкт-Петербург, ул. Софийская, д.66, лит. А.</p>
          <p>Для грузового транспорта - заезд с улицы 9-го января.</p>
          <p>Зона погрузки - 7-е ворота.</p>
          <p className="mt-[31px] font-bold">Часы работы:</p>
        </div>
        <p>С понедельника по пятницу, с 9:00 до 18:00.</p>
        <a className="mt-[28px] flex h-[55px] w-[200px] items-center justify-center border border-black text-[15px] font-bold">На главную</a>
      </main>

      <section className="relative h-[500px] w-full overflow-hidden">
        <MapCanvas />
        <MapControls />
      </section>

      <footer className="h-[105px] bg-[linear-gradient(180deg,#ffffff_0%,#ffffff_28%,#cbd3f6_100%)]">
        <nav className="flex whitespace-nowrap pl-[641px] pt-[48px] text-[15px] font-bold leading-[20px]">
          <a className="w-[145px]">На главную</a>
          <a className="w-[113px]">Каталог</a>
          <a className="w-[117px]">Проекты</a>
          <a className="w-[146px]">О компании</a>
          <a>Контакты</a>
        </nav>
        <p className="mt-[17px] text-center text-[11px] leading-[16px]">Copyright © as-terra.ru, 2019 | Все права защищены</p>
      </footer>

      <div className="absolute left-[1745px] top-[1157px] flex h-[70px] w-[70px] items-center justify-center rounded-full bg-[#f78c4c]/25">
        <div className="flex h-[56px] w-[56px] items-center justify-center rounded-full bg-[#f78c4c]">
          <svg width="20" height="20"><rect width="20" height="20" rx="1.5" fill="#fff" /><path d="M3 5h14M3 10h14M3 15h9" stroke="#f78c4c" strokeWidth="2" /></svg>
        </div>
      </div>
    </div>
  );
}
